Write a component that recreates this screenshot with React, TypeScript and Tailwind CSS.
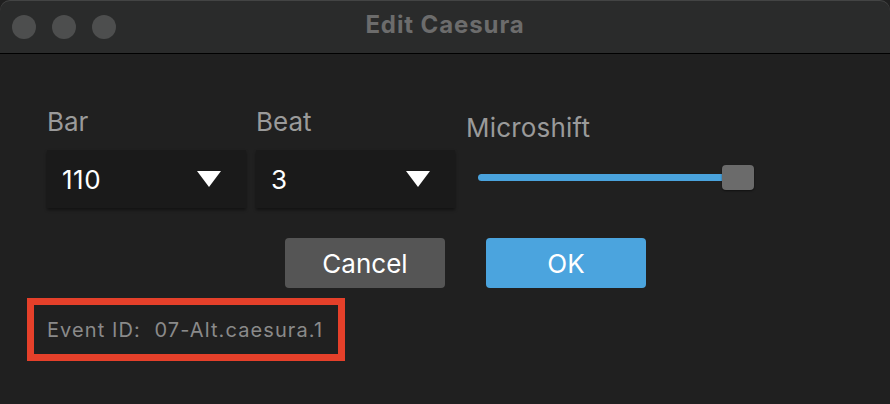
import { useState } from 'react'

function Dropdown({ value }: { value: string }) {
  return (
    <div className="flex h-[58px] w-[199px] items-center justify-between bg-[#1a1a1a] pl-[15px] pr-[25px] shadow-[0_2px_3px_rgba(0,0,0,0.45)]">
      <span className="text-[26px] tracking-[0.5px] text-white">{value}</span>
      <svg width="24" height="16" viewBox="0 0 24 16">
        <path d="M0 0 H24 L12 16 Z" fill="#ffffff" />
      </svg>
    </div>
  )
}

export default function App() {
  const [shift] = useState(100)

  return (
    <div className="h-[404px] w-[890px] overflow-hidden bg-[#202020] font-['Inter',sans-serif]">
      <div className="relative flex h-[54px] items-center rounded-t-[10px] border-b border-black bg-[#2a2b2b] shadow-[inset_0_1px_0_rgba(255,255,255,0.12)]">
        <div className="flex gap-4 pl-3">
          <span className="h-6 w-6 rounded-full bg-[#4d4e4e]" />
          <span className="h-6 w-6 rounded-full bg-[#4d4e4e]" />
          <span className="h-6 w-6 rounded-full bg-[#4d4e4e]" />
        </div>
        <div className="absolute inset-x-0 top-0 flex h-[50px] items-center justify-center">
          <span className="text-[24px] font-bold tracking-[0.9px] text-[#6c6c6c]">Edit Caesura</span>
        </div>
      </div>

      <div className="flex gap-[10px] pl-[47px] pt-[52px]">
        <div className="flex flex-col">
          <span className="mb-[12px] text-[26px] leading-[32px] text-[#9a9a9a]">Bar</span>
          <Dropdown value="110" />
        </div>
        <div className="flex flex-col">
          <span className="mb-[12px] text-[26px] leading-[32px] text-[#9a9a9a]">Beat</span>
          <Dropdown value="3" />
        </div>
        <div className="ml-[1px] flex flex-col pt-[6px]">
          <span className="text-[26px] leading-[32px] tracking-[0.2px] text-[#9a9a9a]">Microshift</span>
          <div className="relative ml-[12px] mt-[21px] h-[26px] w-[276px]">
            <div
              className="absolute left-0 top-[9px] h-[7px] rounded-full bg-[#4aa3dd]"
              style={{ width: `${(shift / 100) * 256}px` }}
            />
            <div className="absolute right-0 top-0 h-[25px] w-[32px] rounded-[4px] bg-[#6b6b6b] shadow-[0_1px_2px_rgba(0,0,0,0.5)]" />
          </div>
        </div>
      </div>

      <div className="flex justify-center gap-[41px] pl-[41px] pt-[30px]">
        <button className="h-[50px] w-[160px] rounded-[4px] bg-[#555555] text-[26px] text-white">Cancel</button>
        <button className="h-[50px] w-[160px] rounded-[4px] bg-[#4ba4de] text-[26px] text-white">OK</button>
      </div>

      <div className="ml-[27px] mt-[10px] inline-flex h-[63px] w-[318px] items-center border-[7px] border-[#e5402a] pl-[13px]">
        <span className="whitespace-nowrap text-[20px] tracking-[1.1px] text-[#8a8a8a]">Event ID:&nbsp; 07-Alt.caesura.1</span>
      </div>
    </div>
  )
}
